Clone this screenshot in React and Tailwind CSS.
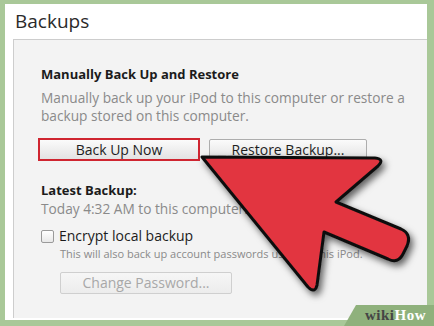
import React from "react";

const font = { fontFamily: '"Open Sans", "Noto Sans", sans-serif' };

const Arrow = () => (
  <svg
    className="absolute left-0 top-0 pointer-events-none"
    width="434"
    height="326"
    viewBox="0 0 434 326"
  >
    <defs>
      <filter id="shadow" x="-20%" y="-20%" width="140%" height="140%">
        <feDropShadow dx="3" dy="4" stdDeviation="3.5" floodColor="#000" floodOpacity="0.6" />
      </filter>
    </defs>
    <path
      d="M202 157 L375 158 Q385 159 378 166 L336 202 L401 229 Q412 234 407 246 L403 254 Q398 264 388 259 L324 232 L317 285 Q315 294 308 287 Z"
      fill="#e2343f"
      stroke="#111"
      strokeWidth="3"
      strokeLinejoin="round"
      filter="url(#shadow)"
    />
  </svg>
);

const Button = ({ children, className = "", disabled }) => (
  <div
    className={
      "flex items-center justify-center rounded-[2px] border bg-gradient-to-b text-[14px] leading-none " +
      (disabled
        ? "text-[#a8a8a8] border-[#cfcfcf] from-[#f6f6f6] to-[#ececec] "
        : "text-[#1e1e1e] border-[#adadad] from-[#fbfbfb] to-[#e3e3e3] ") +
      className
    }
  >
    {children}
  </div>
);

export default function App() {
  return (
    <div className="relative w-[434px] h-[326px] overflow-hidden bg-[#a9c898] pt-[4px] pl-[5px]" style={font}>
      <div className="w-[422px] h-[316px] bg-white flex flex-col">
        <div className="h-[35px] pl-[10px] pt-[4px] text-[19px] leading-[26px] text-[#2a2a2a]">Backups</div>
        <div className="flex-1 ml-[8px] mb-[2px] border-t border-l border-[#cdcdcd] bg-[#f3f3f3] pl-[27px] pt-[25px]">
          <div className="text-[13px] leading-[18px] font-bold text-[#1b1b1b]">Manually Back Up and Restore</div>
          <div className="mt-[6px] text-[13.7px] leading-[18px] text-[#8a8a8a] w-[372px]">
            Manually back up your iPod to this computer or restore a backup stored on this computer.
          </div>
          <div className="mt-[13px] flex items-center">
            <Button className="-ml-[3px] h-[23px] w-[162px] !border-2 !border-[#cf2530] !rounded-none">Back Up Now</Button>
            <Button className="ml-[9px] h-[21px] w-[158px]">Restore Backup...</Button>
          </div>
          <div className="mt-[20px] text-[13px] leading-[18px] font-bold text-[#1b1b1b]">Latest Backup:</div>
          <div className="mt-[1px] text-[13.7px] leading-[18px] text-[#8a8a8a]">Today 4:32 AM to this computer.</div>
          <div className="mt-[9px] flex items-center">
            <div className="w-[13px] h-[13px] rounded-[2px] border border-[#9a9a9a] bg-gradient-to-b from-white to-[#e8e8e8]"></div>
            <div className="ml-[5px] text-[14px] leading-[18px] text-[#1b1b1b]">Encrypt local backup</div>
          </div>
          <div className="ml-[19px] mt-[1px] text-[11px] leading-[16px] text-[#8a8a8a]">
            This will also back up account passwords used on this iPod.
          </div>
          <Button disabled className="ml-[19px] mt-[10px] h-[22px] w-[172px]">Change Password...</Button>
        </div>
      </div>
      <Arrow />
      <div className="absolute right-0 bottom-0 w-[90px] h-[21px]">
        <svg className="absolute inset-0" width="90" height="21" viewBox="0 0 90 21">
          <polygon points="0,21 12,0 90,0 90,21" fill="#8fb17c" />
        </svg>
        <div
          className="absolute left-[21px] top-[1px] text-[15px] leading-[18px] font-bold tracking-[0.5px]"
          style={{ fontFamily: '"Liberation Serif", "DejaVu Serif", serif' }}
        >
          <span className="text-[#454545]">wiki</span>
          <span className="text-white">How</span>
        </div>
      </div>
    </div>
  );
}
